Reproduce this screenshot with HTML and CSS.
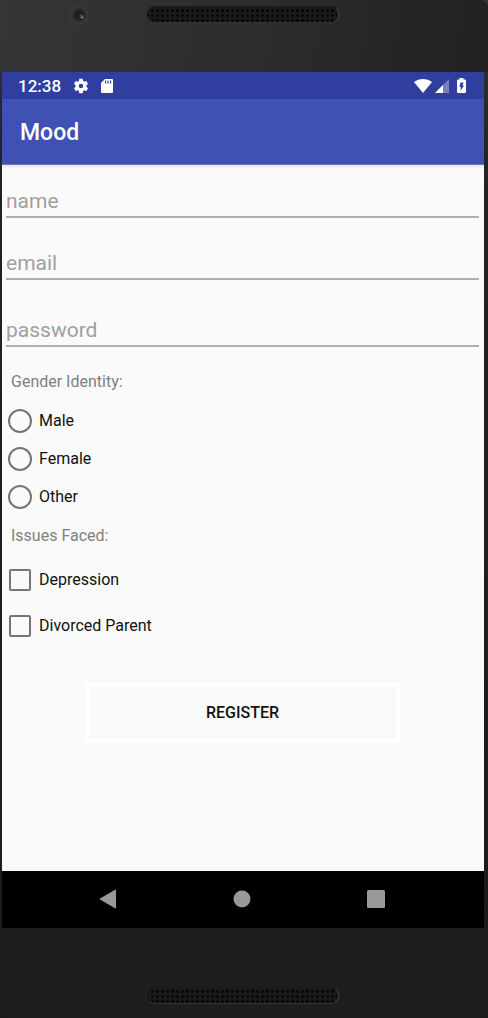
FILE: index.html
```html
<!DOCTYPE html>
<html lang="en">
<head>
<meta charset="utf-8">
<meta name="viewport" content="width=device-width, initial-scale=1">
<title>Mood</title>
<link rel="stylesheet" href="styles.css">
</head>
<body>
<div class="device">
  <div class="bezel bezel-top">
    <svg class="camera" width="22" height="22" viewBox="0 0 22 22" aria-hidden="true">
      <circle cx="11" cy="11" r="10" fill="#383838"/>
      <circle cx="11" cy="11" r="7.5" fill="#303030"/>
      <circle cx="11.500" cy="11" r="5.500" fill="#222027"/>
      <circle cx="13.500" cy="12.500" r="2" fill="#5b4048"/>
      <circle cx="14.500" cy="13.500" r="1" fill="#a87873"/>
    </svg>
    <div class="speaker"></div>
  </div>

  <div class="screen">
    <div class="status-bar">
      <span class="clock">12:38</span>
      <svg class="gear" width="18" height="18" viewBox="0 0 24 24" fill="#fff" aria-hidden="true"><path d="M19.140 12.940c.04-.3.06-.61.06-.94s-.02-.64-.07-.94l2.030-1.580c.18-.14.23-.41.12-.61l-1.920-3.320c-.12-.22-.37-.29-.59-.22l-2.390.96c-.5-.38-1.030-.7-1.620-.94l-.36-2.540c-.04-.24-.24-.41-.48-.41h-3.840c-.24 0-.43.17-.47.41l-.36 2.540c-.59.24-1.130.57-1.620.94l-2.390-.96c-.22-.08-.47 0-.59.22L2.740 8.870c-.12.21-.08.47.12.61l2.030 1.580c-.05.3-.09.63-.09.940s.02.64.07.94l-2.030 1.580c-.18.14-.23.41-.12.61l1.920 3.320c.12.22.37.29.59.22l2.390-.96c.5.38 1.030.7 1.620.94l.36 2.540c.05.24.24.41.48.41h3.840c.24 0 .44-.17.47-.41l.36-2.540c.59-.24 1.130-.56 1.620-.94l2.390.96c.22.08.47 0 .59-.22l1.920-3.320c.12-.22.07-.47-.12-.61l-2.010-1.580zM12 15a3 3 0 1 1 0-6 3 3 0 0 1 0 6z"/></svg>
      <svg class="sd" width="12" height="14" viewBox="0 0 12 14" aria-hidden="true"><path fill="#fff" d="M4 0h7a1 1 0 0 1 1 1v12a1 1 0 0 1-1 1H1a1 1 0 0 1-1-1V4z"/><path fill="#303f9f" d="M4 1.500h1.200v3H4zM6.500 1.500h1.200v3H6.500zM9 1.500h1.200v3H9z"/></svg>
      <span class="spacer"></span>
      <svg width="18" height="14" viewBox="0 0 18 14" aria-hidden="true"><path fill="#fff" d="M0 3C5-.9 13-.9 18 3L9 14z"/></svg>
      <svg class="signal" width="14" height="14" viewBox="0 0 14 14" aria-hidden="true"><path fill="#7780be" d="M14 0v14H0z"/><path fill="#fff" d="M8 6v8H0z"/></svg>
      <svg class="battery" width="9" height="15" viewBox="0 0 9 15" aria-hidden="true"><path fill="#fff" d="M2.500 0h4v1.500H8a1 1 0 0 1 1 1V14a1 1 0 0 1-1 1H1a1 1 0 0 1-1-1V2.500a1 1 0 0 1 1-1h1.500z"/><path fill="#303f9f" d="M3.500 4.500h3l-1 3H7L3.500 13l.5-4H2.500z"/></svg>
    </div>
    <header class="app-bar"><h1 class="title">Mood</h1></header>

    <form class="form">
      <div class="fields">
        <input class="field" type="text" placeholder="name" aria-label="name">
        <input class="field field-email" type="email" placeholder="email" aria-label="email">
        <input class="field field-password" type="password" placeholder="password" aria-label="password">
      </div>

      <fieldset class="group">
        <legend class="legend">Gender Identity:</legend>
        <div class="options">
          <label class="option"><input class="radio" type="radio" name="gender" value="male">Male</label>
          <label class="option"><input class="radio" type="radio" name="gender" value="female">Female</label>
          <label class="option"><input class="radio" type="radio" name="gender" value="other">Other</label>
        </div>
      </fieldset>

      <fieldset class="group">
        <legend class="legend">Issues Faced:</legend>
        <div class="options options-check">
          <label class="option"><input class="check" type="checkbox" name="issue" value="depression">Depression</label>
          <label class="option"><input class="check" type="checkbox" name="issue" value="divorced">Divorced Parent</label>
        </div>
      </fieldset>

      <button class="register" type="button">REGISTER</button>
    </form>

    <nav class="nav-bar" aria-label="System">
      <button class="nav-button" type="button" aria-label="Back"><svg width="20" height="20" viewBox="0 0 20 20"><path fill="#999" stroke="#999" stroke-linejoin="round" d="M2 10 17.500 1v18z"/></svg></button>
      <button class="nav-button" type="button" aria-label="Home"><svg width="20" height="20" viewBox="0 0 20 20"><circle cx="10" cy="10" r="8.500" fill="#999"/></svg></button>
      <button class="nav-button" type="button" aria-label="Recent apps"><svg width="20" height="20" viewBox="0 0 20 20"><rect x="1" y="1" width="18" height="18" rx="1.500" fill="#999"/></svg></button>
    </nav>
  </div>

  <div class="bezel bezel-bottom"><div class="speaker"></div></div>
</div>
</body>
</html>
```
FILE: styles.css
```css
* { box-sizing: border-box; }

body {
  margin: 0;
  background: #1e1e1e;
  font-family: Roboto, "Liberation Sans", sans-serif;
  font-size: 16px;
  line-height: 20px;
  color: #111;
}

.device {
  display: flex;
  flex-direction: column;
  min-height: 100vh;
  padding: 0 4px 0 2px;
  background: linear-gradient(#333 0, #222 200px, #1b1b1b 100%);
}

.bezel {
  position: relative;
  display: flex;
  justify-content: center;
  margin: 0 -4px 0 -2px;
  padding-right: 2px;
}

.bezel-top {
  height: 72px;
  padding-top: 6px;
  background: linear-gradient(100deg, #353535, #2d2d2d 50%, #212121);
  border-top-right-radius: 8px;
}

.bezel-bottom {
  height: 90px;
  padding-top: 59px;
  background: #1e1e1e;
  border-radius: 0 0 8px 8px;
}

.camera {
  position: absolute;
  top: 4px;
  left: 14%;
}

.speaker {
  width: 192px;
  height: 17px;
  border: 1px solid #191919;
  border-right-color: #444;
  border-bottom-color: #333;
  border-radius: 8px;
  background: radial-gradient(circle, #070707 1px, #1a1a1a 2px) 2px 1px / 5px 5px;
}

.screen {
  flex: 1;
  display: flex;
  flex-direction: column;
  background: #fafafa;
}

.status-bar {
  display: flex;
  align-items: center;
  height: 27px;
  padding: 0 18px 0 16px;
  background: #303f9f;
  color: #fff;
}

.clock {
  font-size: 17px;
  font-weight: 500;
}

.gear { margin-left: 11px; }
.sd { margin-left: 11px; }
.spacer { flex: 1; }
.signal { margin-left: 3px; }
.battery { margin-left: 8px; }

.app-bar {
  display: flex;
  align-items: center;
  height: 66px;
  padding: 2px 18px 0;
  background: #3f51b5;
  border-bottom: 1px solid #6977c4;
  box-shadow: 0 1px 4px rgba(0, 0, 0, 0.12);
  color: #fff;
}

.title {
  margin: 0;
  font-size: 23px;
  line-height: 28px;
  font-weight: 500;
}

.form {
  flex: 1;
  display: flex;
  flex-direction: column;
  padding: 20px 5px 24px 4px;
}

.fields {
  display: flex;
  flex-direction: column;
  margin-bottom: 25px;
}

.field {
  width: 100%;
  height: 33px;
  padding: 0;
  border: 0;
  border-bottom: 2px solid #b0b0b0;
  border-radius: 0;
  background: none;
  font: 21px/28px Roboto, "Liberation Sans", sans-serif;
  color: #111;
}

.field::placeholder { color: #a0a0a0; opacity: 1; }
.field-email { margin-top: 29px; }
.field-password { margin-top: 34px; }

.group {
  margin: 0 0 17px;
  padding: 0;
  border: 0;
}

.legend {
  padding: 0 5px;
  color: #808080;
}

.options {
  display: flex;
  flex-direction: column;
  gap: 14px;
  padding: 17px 2px 0;
}

.options-check {
  gap: 22px;
  padding-top: 22px;
}

.option {
  display: flex;
  align-items: center;
  gap: 7px;
  height: 24px;
}

.radio,
.check {
  appearance: none;
  width: 24px;
  height: 24px;
  margin: 0;
  border: 2px solid #757575;
}

.radio { border-radius: 50%; }

.radio:checked { background: radial-gradient(circle, #3f51b5 6px, transparent 7px); }

.check {
  width: 22px;
  height: 22px;
  margin: 0 1px;
  border-radius: 2px;
}

.check:checked { background: #3f51b5; }

.register {
  width: 315px;
  max-width: 100%;
  height: 60px;
  margin: 28px auto 0;
  border: 4px solid #fff;
  background: #fafafa;
  font: 500 16px/20px Roboto, "Liberation Sans", sans-serif;
  color: #111;
}

.nav-bar {
  display: flex;
  justify-content: center;
  align-items: center;
  gap: 86px;
  height: 57px;
  padding: 0 2px 2px 0;
  background: #000;
}

.nav-button {
  display: flex;
  justify-content: center;
  align-items: center;
  width: 48px;
  height: 48px;
  padding: 0;
  border: 0;
  background: none;
}
```
